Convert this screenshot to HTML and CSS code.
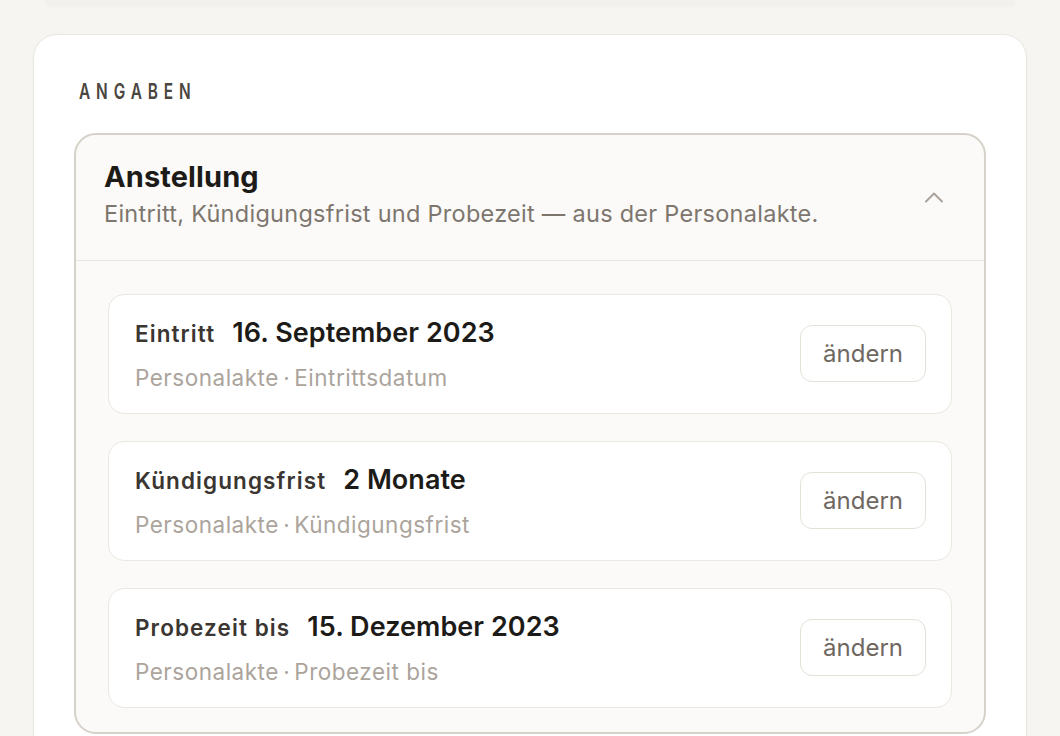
FILE: index.html
```html
<!DOCTYPE html>
<html lang="de">
<head>
<meta charset="utf-8">
<title>Angaben</title>
<link rel="stylesheet" href="styles.css">
</head>
<body>
<div class="prev-card"></div>
<main class="card">
  <h2 class="eyebrow">ANGABEN</h2>
  <section class="accordion">
    <header class="acc-head">
      <div class="acc-titles">
        <h3 class="acc-title">Anstellung</h3>
        <p class="acc-sub">Eintritt, Kündigungsfrist und Probezeit — aus der Personalakte.</p>
      </div>
      <svg class="chev" width="18" height="11" viewBox="0 0 18 11" aria-hidden="true"><path d="M1 9.5 L9 1.5 L17 9.5" fill="none" stroke="#aaa29a" stroke-width="2" stroke-linecap="round" stroke-linejoin="round"/></svg>
    </header>
    <div class="acc-body">
      <div class="row">
        <div class="row-text">
          <div class="row-main"><span class="label">Eintritt</span><span class="value">16. September 2023</span></div>
          <div class="row-src">Personalakte<span class="dot">·</span>Eintrittsdatum</div>
        </div>
        <button class="btn">ändern</button>
      </div>
      <div class="row">
        <div class="row-text">
          <div class="row-main"><span class="label">Kündigungsfrist</span><span class="value">2 Monate</span></div>
          <div class="row-src">Personalakte<span class="dot">·</span>Kündigungsfrist</div>
        </div>
        <button class="btn">ändern</button>
      </div>
      <div class="row">
        <div class="row-text">
          <div class="row-main"><span class="label">Probezeit bis</span><span class="value">15. Dezember 2023</span></div>
          <div class="row-src">Personalakte<span class="dot">·</span>Probezeit bis</div>
        </div>
        <button class="btn">ändern</button>
      </div>
    </div>
  </section>
</main>
</body>
</html>
```

FILE: styles.css
```css
* { box-sizing: border-box; }
html, body { margin: 0; padding: 0; }
body {
  background: #f6f5f1;
  font-family: Inter, "Noto Sans", sans-serif;
  color: #1d1b18;
  width: 1060px;
  height: 736px;
  overflow: hidden;
}
.prev-card {
  height: 3px;
  margin: 0 45px;
  background: #f2f1ed;
  border-radius: 0 0 20px 20px;
  box-shadow: 0 2px 4px rgba(60, 50, 40, 0.06);
}
.card {
  margin: 31px 0 0 33px;
  width: 994px;
  height: 760px;
  background: #ffffff;
  border: 1px solid #ebe8e2;
  border-radius: 24px;
  padding: 44px 40px 0 40px;
  box-shadow: 0 1px 3px rgba(60, 50, 40, 0.04);
}
.eyebrow {
  margin: 0 0 30px 5px;
  font-family: Inter, sans-serif;
  font-weight: 600;
  font-size: 22px;
  line-height: 24px;
  letter-spacing: 8.4px;
  color: #4b4640;
  transform: scaleX(0.7);
  transform-origin: left center;
  white-space: nowrap;
}
.accordion {
  border: 2px solid #d6d1c9;
  border-radius: 22px;
  background: #fbfaf8;
  overflow: hidden;
}
.acc-head {
  display: flex;
  align-items: center;
  justify-content: space-between;
  padding: 24px 41px 30px 28px;
  border-bottom: 1px solid #e9e5de;
}
.acc-title {
  margin: 0;
  font-size: 29px;
  line-height: 36px;
  font-weight: 700;
  letter-spacing: 0.1px;
  color: #1d1b18;
}
.acc-sub {
  margin: 3px 0 0;
  font-size: 23.5px;
  line-height: 32px;
  letter-spacing: 0.27px;
  color: #7d766e;
}
.chev { display: block; margin-top: 6px; }
.acc-body {
  display: flex;
  flex-direction: column;
  gap: 27px;
  padding: 33px 32px 24px 32px;
}
.row {
  display: flex;
  align-items: center;
  justify-content: space-between;
  background: #ffffff;
  border: 1px solid #ebe7e1;
  border-radius: 16px;
  padding: 20px 25px 21px 26px;
  height: 120px;
}
.row-main {
  display: flex;
  align-items: baseline;
  gap: 17px;
  line-height: 36px;
}
.label {
  font-size: 22.5px;
  font-weight: 600;
  letter-spacing: 1.1px;
  color: #3b3631;
}
.value {
  font-size: 27px;
  font-weight: 600;
  letter-spacing: 0.05px;
  color: #1d1b18;
}
.row-src {
  margin-top: 11px;
  font-size: 22.5px;
  line-height: 30px;
  letter-spacing: 0.5px;
  color: #aba49c;
}
.dot {
  margin: 0 4px 0 4.5px;
}
.btn {
  font-family: inherit;
  font-size: 24px;
  color: #6f6861;
  background: #ffffff;
  border: 1.5px solid #e5e1d9;
  border-radius: 12px;
  width: 126px;
  height: 57px;
  padding: 0;
}
```
